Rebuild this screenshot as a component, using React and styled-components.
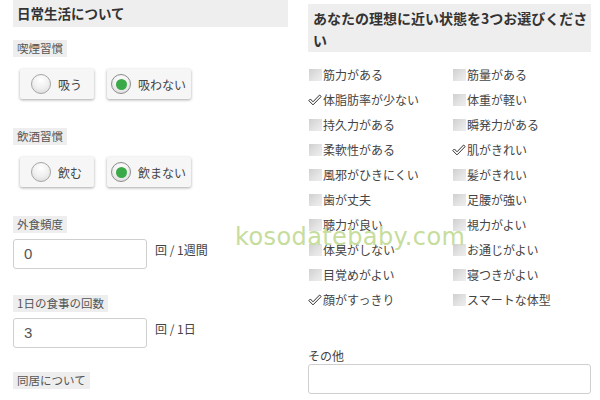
import React from "react";
import styled, { createGlobalStyle } from "styled-components";

const Global = createGlobalStyle`
  html, body { margin: 0; padding: 0; background: #fff; }
  body {
    width: 600px; height: 400px; overflow: hidden;
    font-family: "Noto Sans CJK JP", "Noto Sans", sans-serif;
    color: #333;
  }
`;

const Page = styled.div`
  position: relative;
  display: grid;
  grid-template-columns: 275px 283px;
  column-gap: 20px;
  padding-left: 13px;
  height: 400px;
  overflow: hidden;
`;

const Column = styled.div`
  display: flex;
  flex-direction: column;
  align-items: flex-start;
`;

const SectionHeader = styled.div`
  align-self: stretch;
  background: #eeeeee;
  height: 27px;
  line-height: 27px;
  padding-left: 4px;
  font-size: 13.5px;
  font-weight: 700;
  color: #333;
`;

const QuestionHeader = styled.div`
  align-self: stretch;
  margin-top: 4px;
  background: #eeeeee;
  height: 48px;
  box-sizing: border-box;
  padding: 3px 2px 3px 5px;
  line-height: 22px;
  font-size: 14px;
  font-weight: 700;
  color: #333;
`;

const FieldLabel = styled.div`
  margin-top: ${(p) => p.$top}px;
  background: #eeeeee;
  padding: 0 4px;
  height: 17px;
  line-height: 17px;
  font-size: 11.5px;
  color: #555;
`;

const RadioGroup = styled.div`
  display: flex;
  gap: 13px;
  margin-top: 12px;
  margin-left: 7px;
`;

const RadioButton = styled.div`
  display: flex;
  align-items: center;
  justify-content: center;
  gap: 7px;
  min-width: 74px;
  height: 30px;
  box-sizing: border-box;
  padding: 0 5px 0 4px;
  background: #f6f6f6;
  border-radius: 2px;
  box-shadow: 0 1px 3px rgba(0, 0, 0, 0.35);
  font-size: 12px;
  color: #444;
`;

const RadioCircle = styled.span`
  width: 20px;
  height: 20px;
  box-sizing: border-box;
  border-radius: 50%;
  border: 1px solid ${(p) => (p.$on ? "#8c8c8c" : "#a6a6a6")};
  background: radial-gradient(circle at 50% 30%, #ffffff 0%, #f0f0f0 50%, #d6d6d6 100%);
  display: flex;
  align-items: center;
  justify-content: center;
  &::after {
    content: "";
    display: ${(p) => (p.$on ? "block" : "none")};
    width: 11px;
    height: 11px;
    border-radius: 50%;
    background: #3aa948;
  }
`;

const InputRow = styled.div`
  display: flex;
  align-items: flex-start;
  gap: 8px;
  margin-top: 6px;
`;

const TextBox = styled.div`
  width: ${(p) => p.$w}px;
  height: 30px;
  box-sizing: border-box;
  border: 1px solid #cfcfcf;
  border-radius: 3px;
  background: #fff;
  padding-left: 10px;
  line-height: 28px;
  font-family: "Liberation Sans", sans-serif;
  font-size: 15px;
  color: #555;
  margin-top: ${(p) => p.$top || 0}px;
`;

const Unit = styled.span`
  padding-top: 2px;
  font-size: 12px;
  color: #444;
`;

const CheckGrid = styled.div`
  margin-top: 10px;
  display: grid;
  grid-template-columns: 144px 139px;
  grid-auto-rows: 25px;
`;

const CheckItem = styled.div`
  display: flex;
  align-items: center;
  gap: 1px;
  font-size: 12px;
  color: #444;
`;

const Box = styled.span`
  width: 13px;
  height: 12px;
  margin-left: 1px;
  background: linear-gradient(135deg, #cfcfcf 0%, #e4e4e4 60%, #eeeeee 100%);
`;

const CheckMark = styled.svg`
  width: 14px;
  height: 12px;
`;

const OtherLabel = styled.div`
  margin-top: 35px;
  font-size: 12px;
  line-height: 17px;
  color: #444;
`;

const Watermark = styled.div`
  position: absolute;
  left: 235px;
  top: 223px;
  font-family: "DejaVu Sans", sans-serif;
  font-size: 24px;
  letter-spacing: 0.4px;
  color: #c6dd9c;
  pointer-events: none;
`;

const Check = () => (
  <CheckMark viewBox="0 0 14 12">
    <polygon
      points="0.8,6.6 2.4,5 5,7.8 11.6,1 13.2,2.5 5,10.9"
      fill="#fff"
      stroke="#333"
      strokeWidth="1"
      strokeLinejoin="round"
    />
  </CheckMark>
);

const items = [
  ["筋力がある", false], ["筋量がある", false],
  ["体脂肪率が少ない", true], ["体重が軽い", false],
  ["持久力がある", false], ["瞬発力がある", false],
  ["柔軟性がある", false], ["肌がきれい", true],
  ["風邪がひきにくい", false], ["髪がきれい", false],
  ["歯が丈夫", false], ["足腰が強い", false],
  ["聴力が良い", false], ["視力がよい", false],
  ["体臭がしない", false], ["お通じがよい", false],
  ["目覚めがよい", false], ["寝つきがよい", false],
  ["顔がすっきり", true], ["スマートな体型", false],
];

const Radio = ({ label, on }) => (
  <RadioButton>
    <RadioCircle $on={on} />
    <span>{label}</span>
  </RadioButton>
);

export default function App() {
  return (
    <>
      <Global />
      <Page>
        <Column>
          <SectionHeader>日常生活について</SectionHeader>
          <FieldLabel $top={13}>喫煙習慣</FieldLabel>
          <RadioGroup>
            <Radio label="吸う" />
            <Radio label="吸わない" on />
          </RadioGroup>
          <FieldLabel $top={29}>飲酒習慣</FieldLabel>
          <RadioGroup>
            <Radio label="飲む" />
            <Radio label="飲まない" on />
          </RadioGroup>
          <FieldLabel $top={29}>外食頻度</FieldLabel>
          <InputRow>
            <TextBox $w={134}>0</TextBox>
            <Unit>回 / 1週間</Unit>
          </InputRow>
          <FieldLabel $top={26}>1日の食事の回数</FieldLabel>
          <InputRow>
            <TextBox $w={134}>3</TextBox>
            <Unit>回 / 1日</Unit>
          </InputRow>
          <FieldLabel $top={24}>同居について</FieldLabel>
        </Column>
        <Column>
          <QuestionHeader>あなたの理想に近い状態を3つお選びください</QuestionHeader>
          <CheckGrid>
            {items.map(([t, c]) => (
              <CheckItem key={t}>
                {c ? <Check /> : <Box />}
                <span>{t}</span>
              </CheckItem>
            ))}
          </CheckGrid>
          <OtherLabel>その他</OtherLabel>
          <TextBox $w={283} />
        </Column>
        <Watermark>kosodatebaby.com</Watermark>
      </Page>
    </>
  );
}
